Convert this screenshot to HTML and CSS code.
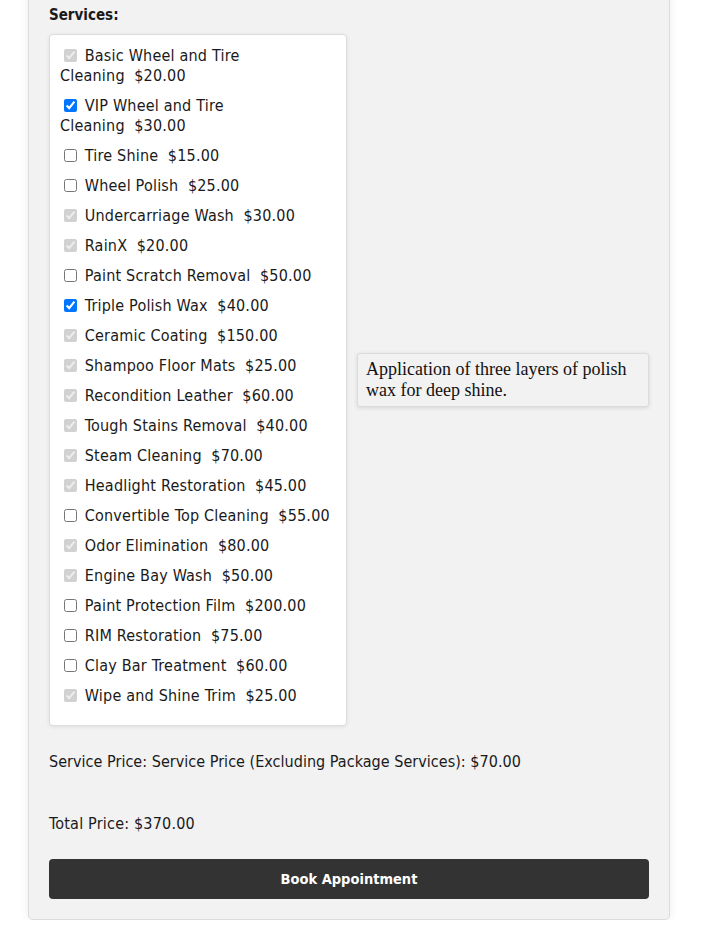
FILE: index.html
```html
<!DOCTYPE html>
<html>
<head>
<meta charset="utf-8">
<link rel="stylesheet" href="styles.css">
</head>
<body>
<div class="form-card">
  <div class="field-label">Services:</div>
  <div class="services-row">
    <div class="services-list">
      <div class="svc"><input type="checkbox" checked disabled> Basic Wheel and Tire Cleaning&nbsp;&nbsp;$20.00</div>
      <div class="svc"><input type="checkbox" checked> VIP Wheel and Tire Cleaning&nbsp;&nbsp;$30.00</div>
      <div class="svc"><input type="checkbox"> Tire Shine&nbsp;&nbsp;$15.00</div>
      <div class="svc"><input type="checkbox"> Wheel Polish&nbsp;&nbsp;$25.00</div>
      <div class="svc"><input type="checkbox" checked disabled> Undercarriage Wash&nbsp;&nbsp;$30.00</div>
      <div class="svc"><input type="checkbox" checked disabled> RainX&nbsp;&nbsp;$20.00</div>
      <div class="svc"><input type="checkbox"> Paint Scratch Removal&nbsp;&nbsp;$50.00</div>
      <div class="svc"><input type="checkbox" checked> Triple Polish Wax&nbsp;&nbsp;$40.00</div>
      <div class="svc"><input type="checkbox" checked disabled> Ceramic Coating&nbsp;&nbsp;$150.00</div>
      <div class="svc"><input type="checkbox" checked disabled> Shampoo Floor Mats&nbsp;&nbsp;$25.00</div>
      <div class="svc"><input type="checkbox" checked disabled> Recondition Leather&nbsp;&nbsp;$60.00</div>
      <div class="svc"><input type="checkbox" checked disabled> Tough Stains Removal&nbsp;&nbsp;$40.00</div>
      <div class="svc"><input type="checkbox" checked disabled> Steam Cleaning&nbsp;&nbsp;$70.00</div>
      <div class="svc"><input type="checkbox" checked disabled> Headlight Restoration&nbsp;&nbsp;$45.00</div>
      <div class="svc"><input type="checkbox"> Convertible Top Cleaning&nbsp;&nbsp;$55.00</div>
      <div class="svc"><input type="checkbox" checked disabled> Odor Elimination&nbsp;&nbsp;$80.00</div>
      <div class="svc"><input type="checkbox" checked disabled> Engine Bay Wash&nbsp;&nbsp;$50.00</div>
      <div class="svc"><input type="checkbox"> Paint Protection Film&nbsp;&nbsp;$200.00</div>
      <div class="svc"><input type="checkbox"> RIM Restoration&nbsp;&nbsp;$75.00</div>
      <div class="svc"><input type="checkbox"> Clay Bar Treatment&nbsp;&nbsp;$60.00</div>
      <div class="svc"><input type="checkbox" checked disabled> Wipe and Shine Trim&nbsp;&nbsp;$25.00</div>
    </div>
    <div class="tooltip">Application of three layers of polish wax for deep shine.</div>
  </div>
  <p class="service-price">Service Price: Service Price (Excluding Package Services): $70.00</p>
  <p class="total-price">Total Price: $370.00</p>
  <button class="book-btn" type="button">Book Appointment</button>
</div>
</body>
</html>
```

FILE: styles.css
```css
html, body {
  margin: 0;
  padding: 0;
  background: #ffffff;
}

body {
  font-family: "DejaVu Sans Condensed", "DejaVu Sans", sans-serif;
  font-size: 16px;
  color: #1a1a1a;
}

.form-card {
  box-sizing: border-box;
  width: 642px;
  margin: -17px 0 0 28px;
  padding: 20px;
  background: #f2f2f2;
  border: 1px solid #dcdcdc;
  border-radius: 5px;
  box-shadow: 0 0 10px rgba(0, 0, 0, 0.08);
}

.field-label {
  font-weight: bold;
  font-size: 15px;
  line-height: 20px;
  padding-top: 1px;
  margin-bottom: 9px;
}

.services-row {
  display: flex;
  align-items: center;
  gap: 10px;
}

.services-list {
  box-sizing: border-box;
  width: 298px;
  flex: none;
  padding: 11px 10px 9px;
  background: #fff;
  border: 1px solid #dddddd;
  border-radius: 4px;
  box-shadow: 0 1px 4px rgba(0, 0, 0, 0.08);
}

.svc {
  line-height: 20px;
  margin-bottom: 10px;
  letter-spacing: 0.2px;
}

.svc input {
  margin: 0 3px 0 4px;
  width: 13px;
  height: 13px;
  vertical-align: -1px;
}

.tooltip {
  flex: 1;
  padding: 5px 8px;
  font-family: "Liberation Serif", serif;
  font-size: 18px;
  line-height: 21px;
  color: #111;
  background: #f2f2f2;
  border: 1px solid #dcdcdc;
  border-radius: 3px;
  box-shadow: 0 1px 4px rgba(0, 0, 0, 0.12);
}

.service-price {
  margin: 26px 0 0;
  line-height: 20px;
  letter-spacing: 0.03px;
}

.total-price {
  margin: 42px 0 0;
  line-height: 20px;
  letter-spacing: 0.2px;
}

.book-btn {
  display: block;
  width: 100%;
  height: 40px;
  margin-top: 25px;
  padding: 0;
  border: none;
  border-radius: 4px;
  background: #333333;
  color: #fff;
  font-family: "DejaVu Sans Condensed", "DejaVu Sans", sans-serif;
  font-weight: bold;
  font-size: 14.5px;
  cursor: pointer;
}
```
